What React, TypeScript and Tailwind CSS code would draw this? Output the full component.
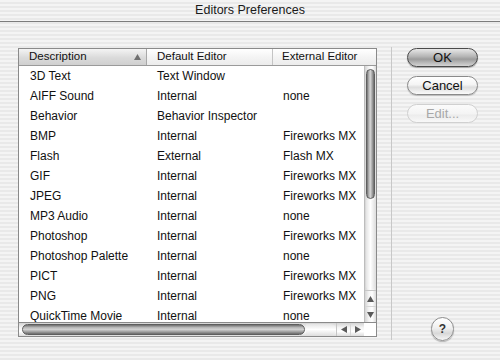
const rows: [string, string, string][] = [
  ["3D Text", "Text Window", ""],
  ["AIFF Sound", "Internal", "none"],
  ["Behavior", "Behavior Inspector", ""],
  ["BMP", "Internal", "Fireworks MX"],
  ["Flash", "External", "Flash MX"],
  ["GIF", "Internal", "Fireworks MX"],
  ["JPEG", "Internal", "Fireworks MX"],
  ["MP3 Audio", "Internal", "none"],
  ["Photoshop", "Internal", "Fireworks MX"],
  ["Photoshop Palette", "Internal", "none"],
  ["PICT", "Internal", "Fireworks MX"],
  ["PNG", "Internal", "Fireworks MX"],
  ["QuickTime Movie", "Internal", "none"],
];

const pinstripe =
  "bg-[image:repeating-linear-gradient(to_bottom,#f4f4f4_0px,#f4f4f4_2px,#e9e9e9_2px,#e9e9e9_4px)]";

export default function App() {
  return (
    <div
      className={`flex h-[360px] w-[500px] flex-col overflow-hidden text-[#111] ${pinstripe}`}
      style={{ fontFamily: '"Liberation Sans", Arial, sans-serif' }}
    >
      <div className="flex h-[22px] items-center justify-center border-b border-[#7d7d7d] text-[12.5px] text-[#1a1a1a]">
        Editors Preferences
      </div>

      <div className="flex pl-[18px] pt-[26px]">
        <PrefsTable />
        <div className="ml-[14px] mt-[-1px] h-[293px] w-px bg-[#c8c8c8]" />
        <div className="ml-[15px] flex h-[294px] w-[71px] flex-col gap-[9px]">
          <AquaButton label="OK" variant="default" />
          <AquaButton label="Cancel" />
          <AquaButton label="Edit..." variant="disabled" />
          <div className="mt-auto flex justify-center pb-[1px]">
            <HelpButton />
          </div>
        </div>
      </div>
    </div>
  );
}

function PrefsTable() {
  return (
    <div className="flex h-[289px] w-[359px] flex-col border border-[#8a8a8a] bg-white">
      <div className="flex h-[17px] shrink-0 border-b border-[#9a9a9a] text-[11.5px]">
        <div className="flex w-[128px] items-center justify-between border-r border-[#a8a8a8] bg-[linear-gradient(to_bottom,#f4f4f4,#dadada_55%,#d0d0d0)] pl-[10px] pr-[5px]">
          <span>Description</span>
          <svg width="7" height="6" viewBox="0 0 7 6" aria-hidden="true">
            <path d="M3.5 0 L7 6 L0 6 Z" fill="#707070" />
          </svg>
        </div>
        <div className="flex w-[126px] items-center border-r border-[#c4c4c4] bg-[linear-gradient(to_bottom,#ffffff,#f3f3f3_55%,#ececec)] pl-[10px]">
          Default Editor
        </div>
        <div className="flex flex-1 items-center bg-[linear-gradient(to_bottom,#ffffff,#f3f3f3_55%,#ececec)] pl-[9px]">
          External Editor
        </div>
      </div>
      <div className="flex min-h-0 flex-1">
        <div className="flex min-w-0 flex-1 flex-col overflow-hidden text-[12px]">
          {rows.map(([desc, def, ext]) => (
            <div key={desc} className="flex h-[20px] shrink-0 items-center">
              <span className="w-[128px] pl-[11px]">{desc}</span>
              <span className="w-[126px] pl-[10px]">{def}</span>
              <span className="pl-[10px]">{ext}</span>
            </div>
          ))}
        </div>
        <VerticalScrollbar />
      </div>
      <div className="flex h-[14px] shrink-0 border-t border-[#8a8a8a]">
        <HorizontalScrollbar />
        <div className="w-[12px] bg-white" />
      </div>
    </div>
  );
}

function VerticalScrollbar() {
  return (
    <div className="flex w-[12px] shrink-0 flex-col border-l border-[#bdbdbd] bg-[linear-gradient(to_right,#d4d4d4,#f4f4f4_35%,#ffffff_65%,#dcdcdc)]">
      <div className="flex flex-1 flex-col px-[1px] pt-[3px]">
        <div className="h-[130px] rounded-full border border-[#5e5e5e] bg-[linear-gradient(to_right,#6f6f6f,#bdbdbd_30%,#d0d0d0_50%,#a0a0a0_75%,#6a6a6a)]" />
        <div className="mt-[1px] flex-1 rounded-b-full bg-[linear-gradient(to_right,#e4e4e4,#ffffff_50%,#e2e2e2)]" />
      </div>
      <div className="flex h-[16px] items-center justify-center border-t border-[#c6c6c6]">
        <svg width="7" height="6" viewBox="0 0 7 6" aria-hidden="true">
          <path d="M3.5 0 L7 6 L0 6 Z" fill="#5a5a5a" />
        </svg>
      </div>
      <div className="flex h-[16px] items-center justify-center border-t border-[#d6d6d6]">
        <svg width="7" height="6" viewBox="0 0 7 6" aria-hidden="true">
          <path d="M0 0 L7 0 L3.5 6 Z" fill="#5a5a5a" />
        </svg>
      </div>
    </div>
  );
}

function HorizontalScrollbar() {
  return (
    <div className="flex flex-1 bg-[linear-gradient(to_bottom,#d4d4d4,#f4f4f4_35%,#ffffff_65%,#dcdcdc)]">
      <div className="flex flex-1 py-[1px] pl-[3px]">
        <div className="w-[283px] rounded-full border border-[#5e5e5e] bg-[linear-gradient(to_bottom,#6f6f6f,#bdbdbd_30%,#d0d0d0_50%,#a0a0a0_75%,#6a6a6a)]" />
        <div className="ml-[1px] flex-1 rounded-r-full bg-[linear-gradient(to_bottom,#e4e4e4,#ffffff_50%,#e2e2e2)]" />
      </div>
      <div className="flex w-[14px] items-center justify-center border-l border-[#c6c6c6]">
        <svg width="6" height="7" viewBox="0 0 6 7" aria-hidden="true">
          <path d="M0 3.5 L6 0 L6 7 Z" fill="#5a5a5a" />
        </svg>
      </div>
      <div className="flex w-[14px] items-center justify-center border-l border-[#d6d6d6]">
        <svg width="6" height="7" viewBox="0 0 6 7" aria-hidden="true">
          <path d="M6 3.5 L0 0 L0 7 Z" fill="#5a5a5a" />
        </svg>
      </div>
    </div>
  );
}

function AquaButton({
  label,
  variant = "normal",
}: {
  label: string;
  variant?: "normal" | "default" | "disabled";
}) {
  return (
    <div
      className={`flex h-[19px] items-center justify-center rounded-full border text-[13px] ${variantClasses[variant]}`}
    >
      {label}
    </div>
  );
}

function HelpButton() {
  return (
    <div className="flex h-[24px] w-[23px] items-center justify-center rounded-full border border-[#8c8c8c] bg-[linear-gradient(to_bottom,#ffffff,#f0f0f0_45%,#d8d8d8_70%,#f6f6f6)] text-[12px] font-bold text-[#333] shadow-[0_1px_1px_rgba(0,0,0,0.25)]">
      ?
    </div>
  );
}

const variantClasses: Record<"normal" | "default" | "disabled", string> = {
  default:
    "border-[#4a4a4a] bg-[linear-gradient(to_bottom,#e8e8e8,#b4b4b4_45%,#9c9c9c_60%,#d4d4d4)] text-[#111] shadow-[0_1px_1px_rgba(0,0,0,0.3)]",
  normal:
    "border-[#8a8a8a] bg-[linear-gradient(to_bottom,#ffffff,#f4f4f4_45%,#dedede_60%,#fafafa)] text-[#111] shadow-[0_1px_1px_rgba(0,0,0,0.2)]",
  disabled:
    "border-[#d0d0d0] bg-[linear-gradient(to_bottom,#fbfbfb,#f4f4f4_50%,#ececec_60%,#f8f8f8)] text-[#a8a8a8]",
};
